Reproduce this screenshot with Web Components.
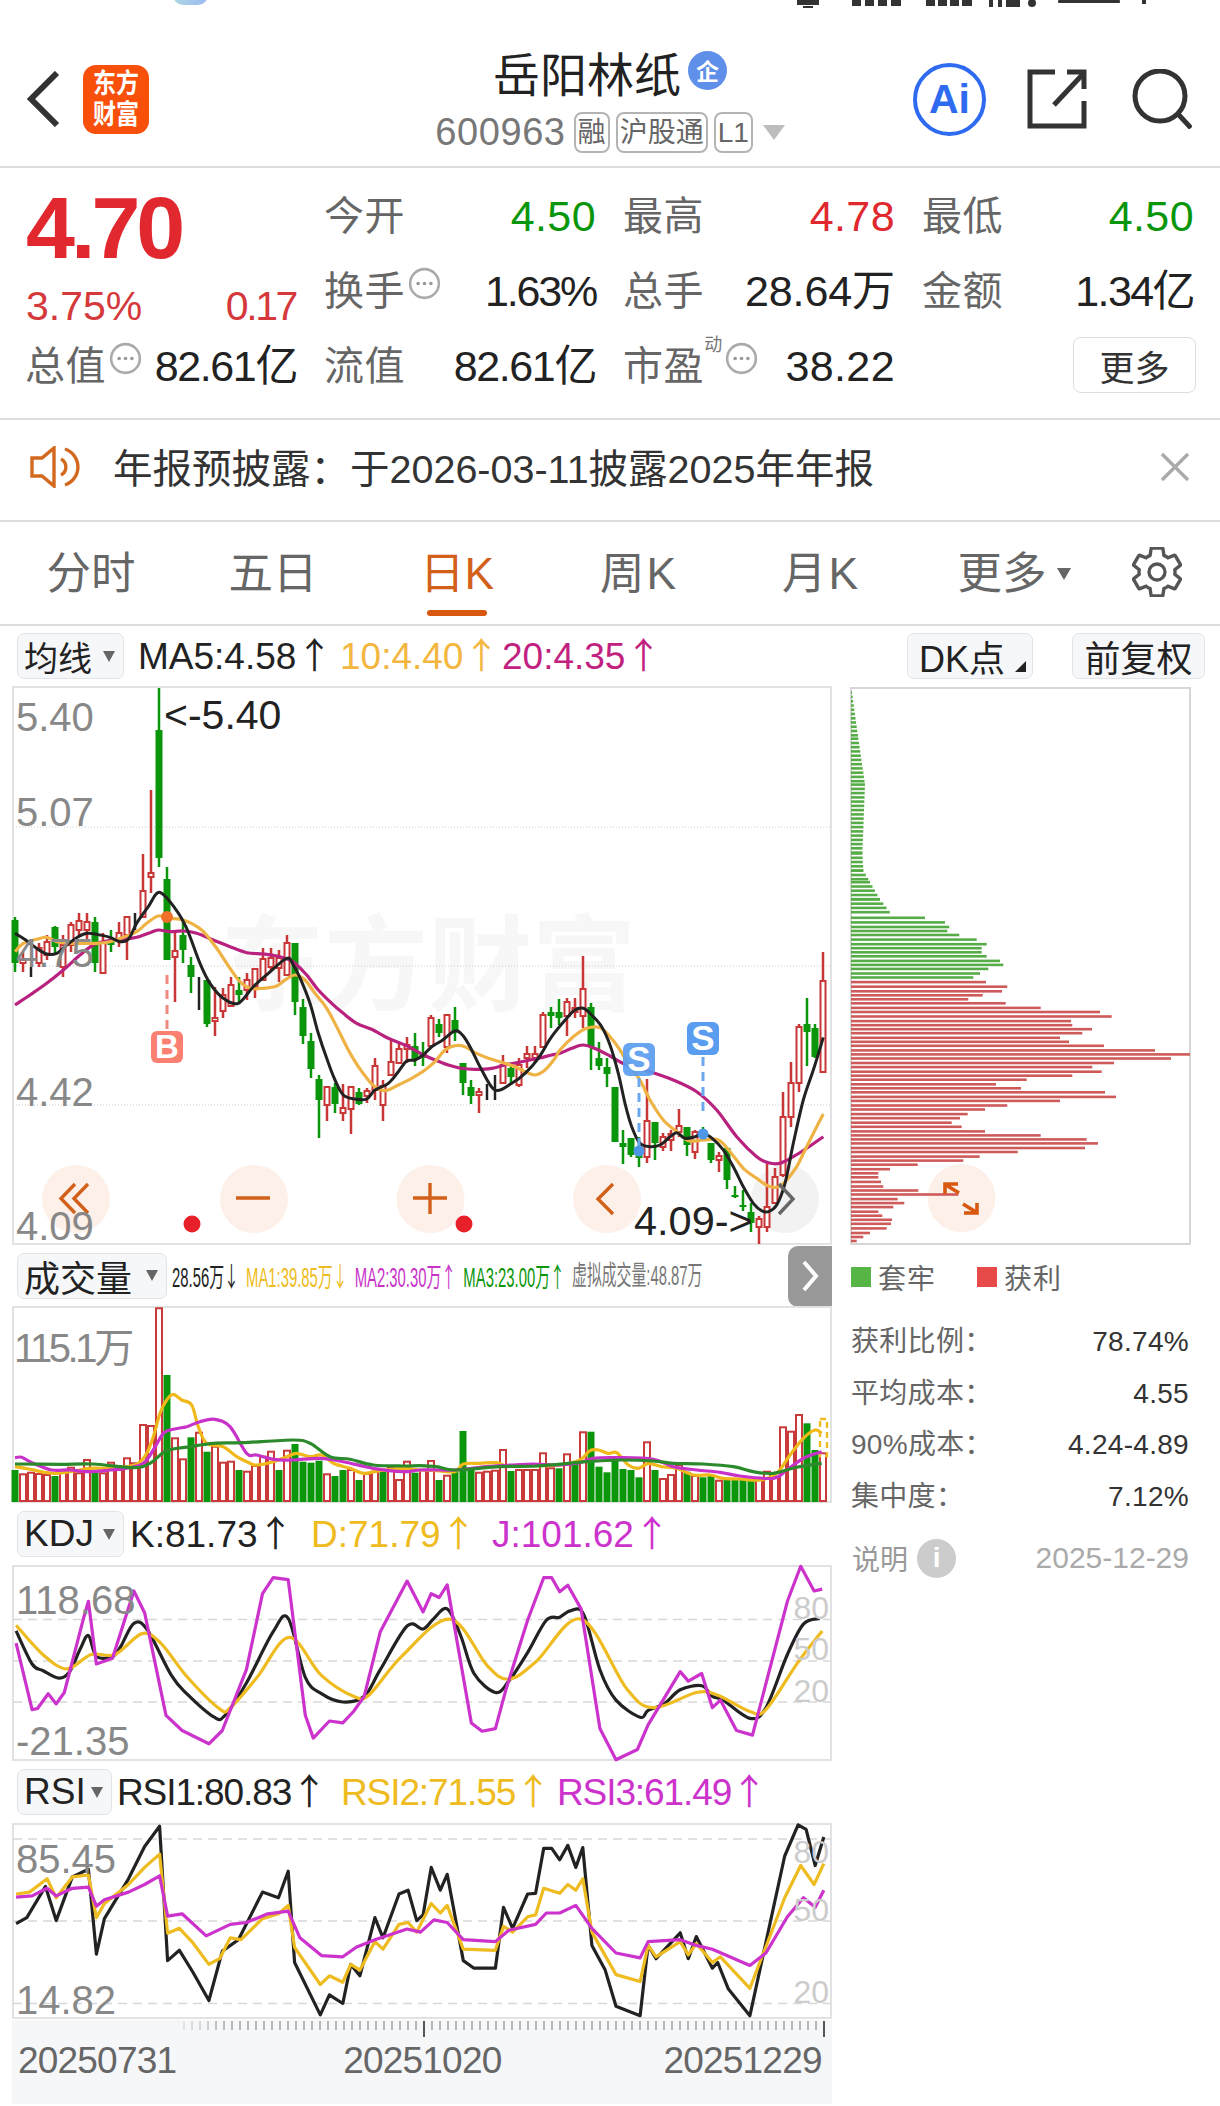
<!doctype html>
<html lang="zh">
<head>
<meta charset="utf-8">
<title>岳阳林纸</title>
<style>
  html, body { margin: 0; background: #fff; }
  body { width: 1220px; height: 2106px; overflow: hidden; color: #222;
    font-family: "Liberation Sans", "Noto Sans CJK SC", sans-serif; }
</style>
</head>
<body>
<status-bar></status-bar>
<stock-header></stock-header>
<quote-panel>
  <price-block style="grid-row: span 2"></price-block>
  <quote-cell style="color:#0a960a;letter-spacing:.4px"><span slot="label">今开</span>4.50</quote-cell>
  <quote-cell style="color:#e0282e;letter-spacing:.4px"><span slot="label">最高</span>4.78</quote-cell>
  <quote-cell style="color:#0a960a;letter-spacing:.4px"><span slot="label">最低</span>4.50</quote-cell>
  <quote-cell info style="letter-spacing:-2.2px"><span slot="label">换手</span>1.63%</quote-cell>
  <quote-cell style="letter-spacing:-.1px"><span slot="label">总手</span>28.64万</quote-cell>
  <quote-cell style="letter-spacing:-1.6px"><span slot="label">金额</span>1.34亿</quote-cell>
  <quote-cell info style="letter-spacing:-1.4px"><span slot="label">总值</span>82.61亿</quote-cell>
  <quote-cell style="letter-spacing:-1.4px"><span slot="label">流值</span>82.61亿</quote-cell>
  <quote-cell info style="letter-spacing:.4px"><span slot="label">市盈</span><span slot="sup">动</span>38.22</quote-cell>
  <more-button>更多</more-button>
</quote-panel>
<notice-bar>年报预披露：于2026-03-11披露2025年年报</notice-bar>
<period-tabs>
  <tab-item style="width:182px">分时</tab-item>
  <tab-item style="width:182px">五日</tab-item>
  <tab-item active style="width:186px">日K</tab-item>
  <tab-item style="width:178px;letter-spacing:2px">周K</tab-item>
  <tab-item style="width:186px;letter-spacing:2px">月K</tab-item>
  <tab-item caret style="width:200px">更多</tab-item>
</period-tabs>
<indicator-row style="height:60px;padding-left:17px;gap:14px">
  <ind-select style="width:107px;font-size:34px">均线</ind-select>
  <ind-stat style="color:#222;width:188px">MA5:4.58<b>↑</b></ind-stat>
  <ind-stat style="color:#f3b63f;width:148px">10:4.40<b>↑</b></ind-stat>
  <ind-stat style="color:#c2227f">20:4.35<b>↑</b></ind-stat>
  <plain-button corner style="margin-left:auto;width:126px">DK点</plain-button>
  <plain-button style="margin-left:25px;margin-right:15px;width:133px">前复权</plain-button>
</indicator-row>
<chart-layout>
  <div slot="left">
    <kline-chart></kline-chart>
    <indicator-row style="height:61px;padding-left:5px;gap:5px">
      <ind-select style="width:150px;font-size:36px">成交量</ind-select>
      <tiny-stats></tiny-stats>
      <flag-button></flag-button>
    </indicator-row>
    <volume-chart></volume-chart>
    <indicator-row style="height:62px;padding-left:5px;gap:6px">
      <ind-select style="width:107px;font-size:37px">KDJ</ind-select>
      <ind-stat style="color:#222;width:175px">K:81.73<b>↑</b></ind-stat>
      <ind-stat style="color:#eebb20;width:175px">D:71.79<b>↑</b></ind-stat>
      <ind-stat style="color:#cc33cc">J:101.62<b>↑</b></ind-stat>
    </indicator-row>
    <osc-chart kind="kdj"></osc-chart>
    <indicator-row style="height:62px;padding-left:5px;gap:5px">
      <ind-select style="width:95px;font-size:37px">RSI</ind-select>
      <ind-stat style="color:#222;width:219px;letter-spacing:-1.1px">RSI1:80.83<b>↑</b></ind-stat>
      <ind-stat style="color:#eebb20;width:211px;letter-spacing:-1.1px">RSI2:71.55<b>↑</b></ind-stat>
      <ind-stat style="color:#cc33cc;letter-spacing:-1.1px">RSI3:61.49<b>↑</b></ind-stat>
    </indicator-row>
    <osc-chart kind="rsi"></osc-chart>
    <date-axis></date-axis>
  </div>
  <chip-panel slot="right"></chip-panel>
</chart-layout>

<script>
// candle table, read off the screenshot in page pixels: type, high, body top, body bottom, low
const CANDLES = [
  ["g",917,920,963,972],["r",952,960,963,972],["k",967,967,977,977],["r",943,948,963,967],
  ["r",935,942,955,960],["g",926,927,947,955],["r",935,945,967,977],["r",922,925,945,952],
  ["r",913,921,930,937],["r",913,922,930,940],["g",917,922,963,972],["r",933,942,973,973],
  ["g",930,940,945,952],["r",922,933,940,947],["r",917,917,935,960],["k",913,913,930,930],
  ["r",854,891,917,918],["r",790,873,877,893],["g",688,730,858,867],["g",867,879,960,960],
  ["r",930,951,957,1002],["g",920,935,950,963],["g",957,965,977,993],["k",977,977,1010,1010],
  ["g",980,980,1024,1027],["r",987,1018,1021,1036],["r",988,995,1011,1018],["r",977,985,1006,1007],
  ["g",977,990,995,1003],["r",973,980,990,1000],["r",969,969,987,998],["r",948,959,980,980],
  ["r",948,958,967,970],["r",950,958,968,982],["r",935,943,975,975],["g",943,943,1002,1015],
  ["g",999,1007,1036,1044],["g",1033,1041,1069,1078],["g",1075,1079,1100,1138],["r",1087,1087,1105,1121],
  ["g",1083,1087,1104,1113],["r",1084,1108,1113,1121],["r",1087,1087,1109,1134],["g",1088,1092,1104,1105],
  ["r",1088,1091,1096,1103],["r",1058,1066,1090,1100],["r",1080,1086,1105,1121],["r",1040,1062,1075,1075],
  ["r",1043,1049,1063,1063],["r",1037,1045,1049,1063],["g",1033,1046,1060,1066],["g",1042,1052,1058,1066],
  ["r",1015,1018,1046,1047],["g",1019,1024,1033,1037],["r",1015,1015,1047,1053],["g",1007,1020,1032,1041],
  ["g",1063,1063,1083,1095],["g",1080,1087,1096,1104],["r",1088,1092,1095,1113],["k",1084,1084,1100,1100],
  ["k",1075,1075,1100,1100],["r",1055,1065,1083,1083],["g",1063,1068,1077,1085],["r",1058,1065,1085,1087],
  ["r",1046,1054,1058,1068],["r",1046,1054,1058,1063],["r",1012,1015,1047,1047],["g",1007,1012,1016,1028],
  ["g",999,1012,1018,1025],["r",998,1002,1016,1036],["r",998,1008,1012,1018],["r",956,989,1016,1028],
  ["g",1003,1007,1047,1070],["g",1042,1058,1066,1070],["g",1058,1067,1074,1087],["g",1087,1087,1142,1142],
  ["g",1130,1143,1147,1164],["g",1138,1138,1155,1157],["g",1137,1147,1158,1167],["r",1079,1121,1157,1163],
  ["g",1122,1122,1143,1160],["r",1133,1137,1147,1151],["r",1130,1134,1140,1151],["r",1109,1126,1132,1137],
  ["g",1127,1127,1145,1156],["r",1130,1132,1152,1159],["g",1127,1130,1138,1140],["g",1143,1143,1160,1163],
  ["r",1152,1156,1160,1172],["g",1148,1148,1180,1189],["g",1186,1195,1197,1198],["g",1190,1205,1207,1211],
  ["g",1203,1212,1223,1232],["r",1216,1219,1227,1244],["r",1164,1207,1227,1232],["r",1168,1177,1203,1203],
  ["r",1092,1117,1175,1177],["r",1062,1083,1117,1127],["r",1024,1027,1083,1092],["g",998,1024,1032,1066],
  ["g",1024,1028,1057,1058],["r",952,981,1072,1072]
];

// volume bar tops, y as read in the 3x crop of that chart
const VOLUME = "g510 r523 r518 r522 r525 g528 r510 r503 r520 r480 g518 r520 r488 r510 r475 r490 r375 r378 r25 g225 r415 r478 g412 r398 g455 r440 r488 r485 g510 r515 r498 r470 r455 g510 r452 g432 g485 g488 g482 r523 g528 g510 r510 g540 r522 r515 g515 r503 r540 r485 g518 r510 r483 g540 r527 g515 g393 g510 r518 r515 r512 r450 g513 r510 r510 r510 r460 r505 g505 r463 g490 r397 g395 g500 g517 g480 g507 g510 g532 r427 g510 r537 r525 r495 g515 r528 g532 g528 r542 g537 g537 g540 g542 r540 r515 r530 r382 r395 r345 g370 g450 r460".split(" ");

// crop coordinates -> page pixels
const crop = (ox, oy, sx, sy, list) => {
  const out = [];
  for (let i = 0; i < list.length; i += 2) out.push([ox + list[i] / sx, oy + list[i + 1] / sy]);
  return out;
};
const A = (...l) => crop(10, 880, 3, 3, l);
const B = (...l) => crop(285, 930, 3, 3, l);
const C = (...l) => crop(560, 930, 3, 3, l);
const V1 = (...l) => crop(10, 1300, 3, 3, l);
const V2 = (...l) => crop(420, 1300, 3, 3, l);
const O = (...l) => crop(0, 1510, 1.867, 2.63, l);

const MA5 = [...A(15,160,50,182,80,205,110,222,140,220,170,195,205,170,232,160,270,165,300,172,330,185,355,178,380,130,415,80,448,37,495,85,530,145,570,250,600,310,640,355,685,370,730,320,775,280,830,235),
  ...B(25,105,50,155,75,220,100,310,125,385,150,450,175,495,210,507,245,507,270,480,310,460,340,425,365,393,390,390,415,375,440,350,470,332,510,303,535,318,560,360,590,420,630,480,680,460,720,430,760,385,800,320),
  ...C(20,265,45,240,70,235,95,255,125,290,150,345,175,430,195,520,215,590,240,640,270,650,300,645,325,625,350,608,375,625,405,620,430,610,460,628,490,660,520,710,550,770,580,820,605,842,625,845,650,825,675,760,700,640,730,510,760,420,790,322)];
const MA10 = [...A(15,215,40,190,80,178,110,172,140,185,180,190,220,190,260,190,300,185,340,172,380,155,410,130,445,108,480,115,520,120,575,150,620,205,660,265,690,305,720,325,760,325,800,318),
  ...B(0,150,30,135,60,150,90,190,125,235,160,300,190,360,220,410,250,450,270,470,300,482,340,465,380,445,420,420,450,395,480,360,510,347,540,350,570,368,610,385,650,397,690,410,720,425,750,435,780,420,810,385),
  ...C(0,360,40,320,80,295,120,293,150,320,180,360,210,410,240,450,270,510,310,570,350,605,385,632,430,630,475,630,510,665,550,715,590,745,625,768,655,770,680,750,710,710,740,650,770,590,790,552)];
const MA20 = [...A(15,375,60,345,110,310,160,270,210,225,250,195,290,183,340,178,380,172,420,158,445,150,480,155,520,153,560,160,610,180,660,200,710,218,760,222,800,228,840,240),
  ...B(30,100,65,135,100,180,140,220,175,250,215,280,260,298,310,325,360,345,410,372,450,390,490,405,530,415,570,418,620,415,660,405,710,395,760,385,800,375),
  ...C(0,370,35,355,70,345,110,358,150,378,200,405,270,425,340,450,410,485,470,540,530,620,590,680,625,698,660,700,700,680,740,655,790,620)];

const VOL_LINES = [
  ["#f0b818", [...V1(15,500,60,508,110,518,140,520,180,515,240,505,300,505,350,500,385,490,410,460,430,410,450,340,470,300,490,283,515,300,545,315,565,380,590,430,640,440,680,470,720,490,740,495,790,485,830,470,860,460,900,470,935,465,970,490,1020,505,1060,520,1110,512,1180,505),
    ...V2(0,510,50,512,105,515,130,492,180,490,230,488,260,498,310,495,360,497,420,495,480,480,510,452,535,450,565,460,590,458,625,495,655,505,685,490,725,500,770,505,820,525,870,525,910,535,960,537,1020,540,1070,520,1110,465,1150,415,1185,390,1205,400)]],
  ["#c832c8", [...V1(15,473,35,472,70,490,125,510,180,510,240,515,300,510,350,505,400,490,430,450,460,400,490,388,530,380,570,365,615,358,660,380,710,460,740,465,790,478,850,480,930,475,1000,485,1090,505,1180,515),
    ...V2(0,510,60,510,105,510,200,500,280,495,340,492,420,495,480,488,520,475,600,473,700,478,760,500,830,510,900,517,960,528,1060,535,1100,510,1150,475,1205,455)]],
  ["#2b8a2b", [...V1(15,492,150,493,250,492,370,503,420,490,470,452,540,440,610,430,700,428,850,420,900,430,960,470,1020,478,1090,495,1180,498),
    ...V2(0,497,50,500,105,510,240,500,350,498,500,485,600,480,700,483,760,490,850,492,940,500,1000,515,1060,520,1130,502,1205,490)]]
];

const OSC = {
  kdj: {
    top: 1565, height: 196, grid: [1619.5, 1661, 1702],
    labels: [["118.68", 16, 1614], ["-21.35", 16, 1755]],
    side: [["80", 1619], ["50", 1660], ["20", 1702]],
    lines: [
      ["#222", O(30,318,60,405,80,422,110,442,130,425,150,365,165,330,180,385,210,385,225,360,250,298,275,315,320,435,350,485,400,545,420,540,460,455,510,320,538,285,570,440,600,483,640,505,680,490,710,420,760,305,790,313,810,285,835,260,860,330,885,430,925,480,950,450,985,375,1020,290,1045,282,1065,265,1090,275,1120,420,1150,500,1195,545,1210,527,1240,510,1270,473,1310,462,1330,490,1350,500,1400,548,1430,520,1470,380,1500,300,1530,285), true],
      ["#eebb20", O(30,303,80,380,125,418,170,380,215,380,265,325,300,350,350,440,410,523,430,520,480,440,540,335,600,435,660,490,690,485,750,385,840,287,910,410,950,445,1000,400,1085,287,1170,470,1220,520,1300,480,1340,487,1400,530,1430,525,1490,400,1535,318), true],
      ["#cc33cc", O(30,350,60,525,70,522,90,483,105,510,120,480,155,290,165,240,180,405,210,390,250,213,270,270,310,540,340,580,390,615,415,580,460,420,490,220,510,178,538,183,570,540,585,600,615,555,640,560,660,530,680,490,710,320,760,187,790,268,805,220,820,230,835,197,880,560,900,582,925,575,945,470,985,290,1015,178,1030,178,1045,215,1060,198,1085,260,1120,575,1150,657,1190,630,1210,565,1270,425,1285,450,1310,430,1330,520,1345,500,1375,580,1405,592,1470,240,1495,148,1520,213,1535,208)]
    ]
  },
  rsi: {
    top: 1823, height: 196, grid: [1839, 1921, 2003.5],
    labels: [["85.45", 16, 1873], ["14.82", 16, 2014]],
    side: [["80", 1863], ["50", 1921], ["20", 2003]],
    lines: [
      ["#222", O(30,1088,50,1072,85,990,105,1080,135,965,165,945,180,1168,195,1075,240,970,270,885,298,832,313,1185,335,1158,360,1215,390,1290,415,1160,445,1130,490,1005,520,1020,538,950,550,1190,598,1328,615,1275,640,1298,655,1195,672,1225,700,1072,715,1125,745,1010,762,1000,778,1080,790,1065,805,940,822,1000,835,958,865,1185,885,1205,925,1205,940,1045,957,1100,985,1010,1000,1008,1015,890,1030,890,1045,920,1060,882,1075,940,1088,888,1105,1145,1130,1210,1150,1305,1195,1330,1210,1145,1225,1180,1270,1112,1285,1180,1300,1122,1330,1205,1340,1190,1360,1260,1400,1330,1465,910,1490,828,1505,840,1522,935,1538,860)],
      ["#eebb20", O(30,1010,55,1005,88,970,105,1020,135,965,165,960,180,1072,195,1035,240,985,270,940,298,905,313,1113,335,1100,360,1138,390,1195,410,1180,430,1125,450,1130,490,1075,520,1062,538,1040,550,1150,598,1248,615,1225,640,1242,655,1195,672,1210,700,1135,715,1155,745,1090,762,1085,778,1110,805,1035,822,1060,835,1040,865,1155,925,1158,940,1095,957,1110,985,1070,1000,1065,1015,995,1045,1008,1060,985,1075,1000,1088,970,1105,1110,1150,1222,1195,1240,1210,1145,1225,1175,1270,1135,1285,1170,1300,1140,1330,1190,1345,1175,1400,1258,1465,1020,1495,935,1520,985,1538,930)],
      ["#cc33cc", O(30,1018,60,1015,88,995,105,1015,135,995,165,992,180,1042,195,1025,240,1005,270,985,298,962,313,1068,340,1062,385,1120,430,1090,460,1085,500,1062,538,1055,560,1125,600,1172,640,1175,665,1150,700,1130,760,1102,785,1110,810,1078,835,1085,865,1130,925,1135,950,1105,1000,1090,1020,1060,1045,1060,1075,1040,1105,1100,1150,1165,1195,1178,1210,1135,1270,1130,1300,1145,1330,1155,1400,1198,1430,1165,1470,1070,1500,1020,1522,1045,1538,1000)]
    ]
  }
};

// chip distribution, crop y -> crop x of the bar end
const CHIP_TOP = [20,66,100,85,180,105,300,97,330,100,350,120,380,150,405,183];
const CHIP_ROWS = [412,285,420,345,428,358,435,352,442,388,450,440,458,470,465,455,472,455,479,470,487,510,494,520,501,475,509,450,516,430,
  524,468,532,532,540,516,547,458,554,415,561,527,569,632,576,810,584,845,592,723,599,727,606,786,613,757,621,690,628,717,635,822,643,975,650,1080,657,1023,665,852,672,787,680,815,687,727,694,590,702,498,709,573,716,825,724,858,731,690,739,532,746,465,754,413,761,390,769,365,776,395,784,465,791,632,798,770,805,804,813,765,820,563,828,449,835,400,842,263,850,180,857,145,864,145,872,153,880,160,887,265,894,385,902,203,909,223,916,190,924,145,931,157,938,186,945,183,953,170,961,120,968,100,975,80];

const cx = i => 15 + 8 * i;
const fmt = n => +n.toFixed(1);
const poly = pts => pts.map(p => fmt(p[0]) + "," + fmt(p[1])).join(" ");

// catmull-rom through the points, the MA lines on the main chart are smooth
function smooth(pts) {
  let d = `M${fmt(pts[0][0])} ${fmt(pts[0][1])}`;
  for (let i = 0; i < pts.length - 1; i++) {
    const p0 = pts[i - 1] || pts[i], p1 = pts[i], p2 = pts[i + 1], p3 = pts[i + 2] || p2;
    d += `C${fmt(p1[0] + (p2[0] - p0[0]) / 6)} ${fmt(p1[1] + (p2[1] - p0[1]) / 6)} ${fmt(p2[0] - (p3[0] - p1[0]) / 6)} ${fmt(p2[1] - (p3[1] - p1[1]) / 6)} ${fmt(p2[0])} ${fmt(p2[1])}`;
  }
  return d;
}

customElements.define("status-bar", class extends HTMLElement {
  constructor() {
    super();
    this.attachShadow({ mode: "open" }).innerHTML = `
<style>
  :host { display: block; height: 44px; overflow: hidden; }
  .row { display: flex; align-items: flex-start; height: 12px; }
  .time { margin: -31px 0 0 70px; font: 700 34px/34px "Liberation Sans", sans-serif; color: #222; width: 103px; letter-spacing: 3px; }
  .app { width: 35px; height: 35px; margin-top: -30px; border-radius: 10px; background: linear-gradient(120deg, #b5e6d8, #9bb8f2); }
  svg { margin-left: auto; }
</style>
<div class="row">
  <span class="time">7:00</span>
  <span class="app"></span>
  <svg width="430" height="10" viewBox="790 0 430 10" fill="#333">
    <rect x="797" y="0" width="22" height="5"/><rect x="803" y="6" width="10" height="2"/>
    <rect x="852" y="0" width="9" height="6"/><rect x="865" y="0" width="9" height="6"/><rect x="878" y="0" width="9" height="6"/><rect x="891" y="0" width="10" height="6"/>
    <rect x="926" y="0" width="9" height="6"/><rect x="938" y="0" width="9" height="6"/><rect x="950" y="0" width="9" height="6"/><rect x="962" y="0" width="10" height="6"/>
    <rect x="989" y="0" width="4" height="7"/><rect x="998" y="0" width="4" height="7"/><rect x="1006" y="0" width="14" height="7"/><circle cx="1032" cy="3" r="4"/>
    <rect x="1058" y="0" width="62" height="3" rx="1"/><rect x="1142" y="0" width="4" height="4"/>
  </svg>
</div>`;
  }
});

customElements.define("stock-header", class extends HTMLElement {
  constructor() {
    super();
    this.attachShadow({ mode: "open" }).innerHTML = `
<style>
  :host { display: grid; grid-template-columns: 320px 580px 320px; height: 122px; border-bottom: 2px solid #ddd; }
  .side { display: flex; align-items: center; padding-bottom: 12px; }
  .left { padding-left: 26px; gap: 23px; }
  .logo { width: 66px; height: 69px; border-radius: 13px; background: #f8500a; color: #fff;
    display: flex; flex-direction: column; align-items: center; justify-content: center;
    font-size: 23px; line-height: 31px; font-weight: 700; }
  .logo span { display: block; transform: scaleY(1.2); }
  .mid { display: flex; flex-direction: column; align-items: center; }
  .title { height: 60px; display: flex; align-items: center; gap: 7px; font-size: 47px; color: #222; margin-top: -3px; }
  .qi { width: 39px; height: 39px; border-radius: 50%; background: #5f8fe8; color: #fff; font-size: 23px; font-weight: 700;
    display: flex; align-items: center; justify-content: center; margin-top: -2px; }
  .sub { height: 60px; display: flex; align-items: center; gap: 6px; color: #777; margin-top: 1px; }
  .code { font-size: 38px; letter-spacing: .6px; margin-right: 2px; }
  .tag { border: 2px solid #b4b4b4; border-radius: 8px; height: 37px; padding: 0 2px; font-size: 28px; line-height: 37px; color: #666; }
  .drop { width: 0; height: 0; border: 11px solid transparent; border-top: 15px solid #bdbdbd; border-bottom: 0; margin-left: 4px; }
  .right { justify-content: flex-end; padding-right: 28px; }
  .ai { width: 65px; height: 65px; border: 4px solid #2e6bf0; border-radius: 50%; color: #2e6bf0; font: 700 41px/1 "Liberation Sans", sans-serif;
    display: flex; align-items: center; justify-content: center; }
  .share { margin-left: 41px; }
  .search { margin-left: 45px; }
</style>
<div class="side left">
  <svg width="34" height="56" viewBox="0 0 34 56"><path d="M31 2 5 28l26 26" fill="none" stroke="#333" stroke-width="6"/></svg>
  <div class="logo"><span>东方</span><span>财富</span></div>
</div>
<div class="mid">
  <div class="title">岳阳林纸<span class="qi">企</span></div>
  <div class="sub"><span class="code">600963</span><span class="tag">融</span><span class="tag">沪股通</span><span class="tag">L1</span><span class="drop"></span></div>
</div>
<div class="side right">
  <span class="ai">Ai</span>
  <svg class="share" width="60" height="60" viewBox="0 0 60 60" fill="none" stroke="#333" stroke-width="5">
    <path d="M28 3H3v54h54V32"/><path d="M27 36 56 5"/><path d="M40 3h17v17"/>
  </svg>
  <svg class="search" width="60" height="60" viewBox="0 0 60 60" fill="none" stroke="#333" stroke-width="5">
    <circle cx="28" cy="27" r="25"/><path d="m46 45 13 14"/>
  </svg>
</div>`;
  }
});

customElements.define("quote-panel", class extends HTMLElement {
  constructor() {
    super();
    this.attachShadow({ mode: "open" }).innerHTML = `
<style>
  :host { display: grid; height: 240px; padding: 10px 0 0 25px; border-bottom: 2px solid #ddd;
    grid-template-columns: repeat(4, 272px); column-gap: 27px; grid-auto-rows: 75px; align-content: start; }
</style>
<slot></slot>`;
  }
});

customElements.define("price-block", class extends HTMLElement {
  constructor() {
    super();
    this.attachShadow({ mode: "open" }).innerHTML = `
<style>
  :host { display: block; color: #e0282e; padding: 2px 0 0 1px; }
  .price { height: 96px; font-size: 88px; line-height: 96px; font-weight: 700; letter-spacing: -4px; }
  .row { height: 60px; display: flex; justify-content: space-between; align-items: center; color: #d5393c; font-size: 41px; }
  .chg { letter-spacing: -2.4px; padding-right: 1px; }
</style>
<div class="price">4.70</div>
<div class="row"><span>3.75%</span><span class="chg">0.17</span></div>`;
  }
});

customElements.define("quote-cell", class extends HTMLElement {
  constructor() {
    super();
    this.attachShadow({ mode: "open" }).innerHTML = `
<style>
  :host { display: flex; align-items: center; font-size: 43px; color: #222; }
  .label { color: #666; font-size: 40px; letter-spacing: .6px; display: flex; align-items: center; margin-top: -6px; }
  .info { display: none; margin: -8px 0 0 3px; }
  :host([info]) .info { display: block; }
  .value { margin-left: auto; white-space: nowrap; line-height: 50px; }
  ::slotted([slot="sup"]) { font-size: 18px; letter-spacing: 0; color: #777; align-self: flex-start; margin-top: -4px; }
</style>
<span class="label"><slot name="label"></slot><slot name="sup"></slot>
  <svg class="info" width="33" height="33" viewBox="0 0 31 31"><circle cx="15.5" cy="15.5" r="13.5" fill="none" stroke="#aaa" stroke-width="2.4"/><g fill="#999"><circle cx="9.5" cy="15.5" r="1.7"/><circle cx="15.5" cy="15.5" r="1.7"/><circle cx="21.5" cy="15.5" r="1.7"/></g></svg>
</span>
<span class="value"><slot></slot></span>`;
  }
});

customElements.define("more-button", class extends HTMLElement {
  constructor() {
    super();
    this.attachShadow({ mode: "open" }).innerHTML = `
<style>
  :host { display: flex; align-items: center; justify-content: center; width: 121px; height: 54px; margin: 9px 0 0 151px;
    border: 1.5px solid #ddd; border-radius: 8px; font-size: 35px; color: #333; }
</style>
<slot></slot>`;
  }
});

customElements.define("notice-bar", class extends HTMLElement {
  constructor() {
    super();
    this.attachShadow({ mode: "open" }).innerHTML = `
<style>
  :host { display: flex; align-items: center; height: 94px; border-bottom: 2px solid #ddd; padding: 0 30px 6px 30px; font-size: 39.5px; color: #333; }
  .text { margin-left: 32px; margin-top: -4px; white-space: nowrap; }
  .close { margin-left: auto; }
</style>
<svg width="51" height="42" viewBox="0 0 51 42" fill="none" stroke="#d2691e" stroke-width="3.4">
  <path d="M2 12h10L24 2v38L12 30H2z"/><path d="M31 13a9 9 0 0 1 0 16"/><path d="M35 3a19 19 0 0 1 0 36"/>
</svg>
<span class="text"><slot></slot></span>
<svg class="close" width="30" height="30" viewBox="0 0 30 30" fill="none" stroke="#aaa" stroke-width="3.4"><path d="m2 2 26 26M28 2 2 28"/></svg>`;
  }
});

customElements.define("period-tabs", class extends HTMLElement {
  constructor() {
    super();
    this.attachShadow({ mode: "open" }).innerHTML = `
<style>
  :host { display: flex; height: 102px; border-bottom: 2px solid #ddd; }
  svg { margin: 25px 0 0 18px; }
</style>
<slot></slot>
<svg width="50" height="50" viewBox="2 2 20 20" fill="none" stroke="#555" stroke-width="1.35">
  <path d="M19.14 12.94c.04-.3.06-.61.06-.94 0-.32-.02-.64-.07-.94l2.03-1.58c.18-.14.23-.41.12-.61l-1.92-3.32c-.12-.22-.37-.29-.59-.22l-2.39.96c-.5-.38-1.03-.7-1.62-.94L14.4 2.81c-.04-.24-.24-.41-.48-.41h-3.84c-.24 0-.43.17-.47.41L9.25 5.35c-.59.24-1.13.57-1.62.94l-2.39-.96c-.22-.08-.47 0-.59.22L2.74 8.87c-.12.21-.08.47.12.61l2.03 1.58c-.05.3-.09.63-.09.94s.02.64.07.94l-2.03 1.58c-.18.14-.23.41-.12.61l1.92 3.32c.12.22.37.29.59.22l2.39-.96c.5.38 1.03.7 1.62.94l.36 2.54c.05.24.24.41.48.41h3.84c.24 0 .44-.17.47-.41l.36-2.54c.59-.24 1.13-.56 1.62-.94l2.39.96c.22.08.47 0 .59-.22l1.92-3.32c.12-.22.07-.47-.12-.61z"/>
  <circle cx="12" cy="12" r="3.2"/>
</svg>`;
  }
});

customElements.define("tab-item", class extends HTMLElement {
  constructor() {
    super();
    this.attachShadow({ mode: "open" }).innerHTML = `
<style>
  :host { display: flex; flex-direction: column; align-items: center; color: #666; font-size: 44.5px; }
  :host([active]) { color: #d2601a; }
  .label { height: 60px; margin-top: 22px; line-height: 60px; display: flex; align-items: center; gap: 10px; }
  .caret { display: none; width: 0; height: 0; border: 7px solid transparent; border-top: 12px solid #666; border-bottom: 0; }
  :host([caret]) .caret { display: block; }
  .line { width: 60px; height: 6px; margin-top: 6px; border-radius: 3px; }
  :host([active]) .line { background: #d9580f; }
</style>
<div class="label"><slot></slot><i class="caret"></i></div>
<div class="line"></div>`;
  }
});

customElements.define("indicator-row", class extends HTMLElement {
  constructor() {
    super();
    this.attachShadow({ mode: "open" }).innerHTML = `
<style>
  :host { display: flex; align-items: center; }
</style>
<slot></slot>`;
  }
});

customElements.define("ind-select", class extends HTMLElement {
  constructor() {
    super();
    this.attachShadow({ mode: "open" }).innerHTML = `
<style>
  :host { display: flex; align-items: center; justify-content: space-between; box-sizing: border-box; height: 46px; flex: none;
    padding: 0 8px 0 6px; border: 1.5px solid #e2e3e6; border-radius: 7px; background: #f6f7f9; color: #222; white-space: nowrap; }
  i { width: 0; height: 0; border: 6.5px solid transparent; border-top: 11px solid #666; border-bottom: 0; }
</style>
<span><slot></slot></span><i></i>`;
  }
});

customElements.define("plain-button", class extends HTMLElement {
  constructor() {
    super();
    this.attachShadow({ mode: "open" }).innerHTML = `
<style>
  :host { display: flex; align-items: center; justify-content: center; box-sizing: border-box; height: 46px; position: relative;
    border: 1.5px solid #e2e3e6; border-radius: 7px; background: #f6f7f9; font-size: 36px; color: #222; white-space: nowrap; }
  i { display: none; position: absolute; right: 6px; bottom: 6px; width: 0; height: 0; border-left: 11px solid transparent; border-bottom: 11px solid #222; }
  :host([corner]) { justify-content: flex-start; padding-left: 11px; }
  :host([corner]) i { display: block; }
</style>
<slot></slot><i></i>`;
  }
});

customElements.define("ind-stat", class extends HTMLElement {
  constructor() {
    super();
    this.attachShadow({ mode: "open" }).innerHTML = `
<style>
  :host { display: block; font-size: 37px; line-height: 46px; white-space: nowrap; flex: none; }
  ::slotted(b) { font-family: "Noto Sans CJK SC", sans-serif; font-weight: 400; font-size: 36px; line-height: 40px; }
</style>
<slot></slot>`;
  }
});

customElements.define("tiny-stats", class extends HTMLElement {
  constructor() {
    super();
    this.attachShadow({ mode: "open" }).innerHTML = `
<style>
  :host { display: block; flex: 1; min-width: 0; height: 30px; }
  .in { display: inline-flex; gap: 13px; font-size: 27px; line-height: 30px; white-space: nowrap; transform: scaleX(.55); transform-origin: left center; }
  b { font-family: "Noto Sans CJK SC", sans-serif; font-weight: 400; line-height: 30px; }
</style>
<div class="in">
  <span style="color:#222">28.56万<b>↓</b></span>
  <span style="color:#eebb20">MA1:39.85万<b>↓</b></span>
  <span style="color:#c832c8">MA2:30.30万<b>↑</b></span>
  <span style="color:#0a960a">MA3:23.00万<b>↑</b></span>
  <span style="color:#777">虚拟成交量:48.87万</span>
</div>`;
  }
});

customElements.define("flag-button", class extends HTMLElement {
  constructor() {
    super();
    this.attachShadow({ mode: "open" }).innerHTML = `
<style>
  :host { display: flex; align-items: center; justify-content: center; flex: none; width: 44px; height: 61px; margin-top: 1px;
    background: #999; border-radius: 10px 0 0 10px; }
</style>
<svg width="18" height="32" viewBox="0 0 18 32" fill="none" stroke="#fff" stroke-width="4"><path d="m3 2 12 14L3 30"/></svg>`;
  }
});

customElements.define("chart-layout", class extends HTMLElement {
  constructor() {
    super();
    this.attachShadow({ mode: "open" }).innerHTML = `
<style>
  :host { display: flex; }
  .left { width: 820px; margin-left: 12px; }
  .right { width: 341px; margin-left: 18px; }
</style>
<div class="left"><slot name="left"></slot></div>
<div class="right"><slot name="right"></slot></div>`;
  }
});

customElements.define("kline-chart", class extends HTMLElement {
  constructor() {
    super();
    this.attachShadow({ mode: "open" }).innerHTML = `
<style>
  :host { display: block; height: 559px; }
  svg { display: block; overflow: visible; }
  text { font-family: "Liberation Sans", "Noto Sans CJK SC", sans-serif; font-size: 40px; }
</style>
<svg width="820" height="559" viewBox="12 686 820 559">${this.__draw()}</svg>`;
  }

  __candles() {
    return CANDLES.map(([t, hi, top, bot, lo], i) => {
      const x = cx(i);
      if (t === "k") return `<path d="M${x} ${hi}V${lo}" stroke="#222" stroke-width="2.5"/>`;
      if (t === "g") return `<path d="M${x} ${hi}V${lo}" stroke="#0a960a" stroke-width="2.5"/><rect x="${x - 3.5}" y="${top}" width="7" height="${Math.max(bot - top, 2)}" fill="#0a960a"/>`;
      return `<path d="M${x} ${hi}V${top}M${x} ${bot}V${lo}" stroke="#c93636" stroke-width="2.5"/><rect x="${x - 2.5}" y="${top}" width="5" height="${bot - top}" fill="#fff" stroke="#c93636" stroke-width="2"/>`;
    }).join("");
  }

  __round(x, fill) {
    return `<circle cx="${x}" cy="1199" r="34" fill="${fill}"/>`;
  }

  __draw() {
    const ic = 'fill="none" stroke="#d2601a" stroke-width="3.4"';
    const labels = [["5.40", 731], ["5.07", 826], ["4.75", 967], ["4.42", 1106], ["4.09", 1240]];
    return `
<rect x="13" y="687" width="818" height="557" fill="#fff" stroke="#e2e2e2" stroke-width="2"/>
<text x="220" y="1003" fill="#f7f7f7" font-weight="700" style="font-size:104px">东方财富</text>
${[827, 966, 1105].map(y => `<path d="M13 ${y}H831" stroke="#ccc" stroke-dasharray="1 2"/>`).join("")}
${this.__round(76, "#fdf0e9")}${this.__round(254, "#fdf0e9")}${this.__round(430.5, "#fdf0e9")}${this.__round(607, "#fdf0e9")}${this.__round(785, "#f2f2f2")}
${this.__candles()}
<path d="${smooth(MA20)}" fill="none" stroke="#b8217e" stroke-width="3.2"/>
<path d="${smooth(MA10)}" fill="none" stroke="#efb244" stroke-width="3.2"/>
<path d="${smooth(MA5)}" fill="none" stroke="#222" stroke-width="3"/>
<path d="M167 975V1030" stroke="#ee8a80" stroke-width="3" stroke-dasharray="9 6"/>
<circle cx="167" cy="917" r="6" fill="#f0702a"/>
<rect x="151" y="1031" width="32" height="32" rx="6" fill="#fb8072"/>
<text x="167" y="1058" text-anchor="middle" fill="#fff" font-weight="700" style="font-size:33px">B</text>
<path d="M639 1078V1148" stroke="#6aa8ee" stroke-width="3" stroke-dasharray="9 6"/>
<circle cx="639" cy="1151" r="5.5" fill="#4c97e8"/>
<rect x="623" y="1043" width="32" height="33" rx="6" fill="#5a9df0" fill-opacity=".92"/>
<text x="639" y="1071" text-anchor="middle" fill="#fff" font-weight="700" style="font-size:35px">S</text>
<path d="M703 1057V1113" stroke="#6aa8ee" stroke-width="3" stroke-dasharray="9 6"/>
<circle cx="703" cy="1134" r="5.5" fill="#4c97e8"/>
<rect x="687" y="1022" width="32" height="33" rx="6" fill="#5a9df0"/>
<text x="703" y="1050" text-anchor="middle" fill="#fff" font-weight="700" style="font-size:35px">S</text>
<path d="M75 1184 61 1198.5 75 1213M88 1184 74 1198.5 88 1213" ${ic}/>
<path d="M236 1198H270" ${ic}/>
<path d="M413 1198H447M430 1183V1214" ${ic}/>
<path d="M613 1184 598 1199 613 1214" ${ic}/>
<path d="M779 1184 793 1199 779 1214" fill="none" stroke="#666" stroke-width="3.4"/>
<circle cx="192" cy="1224" r="8.5" fill="#e8202a"/><circle cx="464" cy="1224" r="8.5" fill="#e8202a"/>
${labels.map(([t, y]) => `<text x="16" y="${y}" fill="#888">${t}</text>`).join("")}
<text x="164" y="729" fill="#222" style="font-size:41px">&lt;-5.40</text>
<text x="634" y="1235" fill="#222" style="font-size:41.5px">4.09-&gt;</text>`;
  }
});

customElements.define("volume-chart", class extends HTMLElement {
  constructor() {
    super();
    const bars = VOLUME.map((v, i) => {
      const x = cx(i), top = 1300 + +v.slice(1) / 3;
      if (v[0] === "g") return `<rect x="${x - 3.5}" y="${fmt(top)}" width="7" height="${fmt(1502 - top)}" fill="#0a960a"/>`;
      return `<rect x="${x - 3}" y="${fmt(top)}" width="6" height="${fmt(1501 - top)}" fill="#fff" stroke="#c93a3a" stroke-width="2"/>`;
    }).join("");
    const lines = VOL_LINES.map(([c, p]) => `<path d="${smooth(p)}" fill="none" stroke="${c}" stroke-width="3.2"/>`).join("");
    this.attachShadow({ mode: "open" }).innerHTML = `
<style>
  :host { display: block; height: 197px; }
  svg { display: block; overflow: visible; }
  text { font-family: "Liberation Sans", "Noto Sans CJK SC", sans-serif; font-size: 40px; }
</style>
<svg width="820" height="197" viewBox="12 1306 820 197">
  <rect x="13" y="1307" width="818" height="195" fill="#fff" stroke="#e2e2e2" stroke-width="2"/>
  ${bars}
  <rect x="820" y="1419" width="7" height="37" fill="none" stroke="#eebb20" stroke-width="2.4" stroke-dasharray="6 4"/>
  ${lines}
  <text x="14" y="1362" fill="#888" letter-spacing="-3.4">115.1万</text>
</svg>`;
  }
});

customElements.define("osc-chart", class extends HTMLElement {
  connectedCallback() {
    if (this.shadowRoot) return;
    const c = OSC[this.getAttribute("kind")];
    const lines = c.lines.map(([col, p, curved]) => curved
      ? `<path d="${smooth(p)}" fill="none" stroke="${col}" stroke-width="3.2"/>`
      : `<polyline points="${poly(p)}" fill="none" stroke="${col}" stroke-width="3.2" stroke-linejoin="round"/>`).join("");
    this.attachShadow({ mode: "open" }).innerHTML = `
<style>
  :host { display: block; height: ${c.height}px; }
  svg { display: block; overflow: visible; }
  text { font-family: "Liberation Sans", sans-serif; font-size: 40px; }
</style>
<svg width="820" height="${c.height}" viewBox="12 ${c.top} 820 ${c.height}">
  <rect x="13" y="${c.top + 1}" width="818" height="${c.height - 2}" fill="#fff" stroke="#e2e2e2" stroke-width="2"/>
  ${c.grid.map(y => `<path d="M13 ${y}H831" stroke="#d8d8d8" stroke-width="1.4" stroke-dasharray="9 6"/>`).join("")}
  ${lines}
  ${c.labels.map(([t, x, y]) => `<text x="${x}" y="${y}" fill="#888">${t}</text>`).join("")}
  ${c.side.map(([t, y]) => `<text x="829" y="${y}" fill="#ccc" text-anchor="end" style="font-size:32px">${t}</text>`).join("")}
</svg>`;
  }
});

customElements.define("date-axis", class extends HTMLElement {
  constructor() {
    super();
    let ticks = "";
    for (let x = 184; x < 826; x += 8) {
      const major = x === 424 || x === 824;
      const op = x < 230 ? fmt(0.3 + (x - 184) / 70) : 1;
      ticks += `<path d="M${x} 1V${major ? 17 : 10}" stroke="${major ? "#555" : "#9a9a9a"}" stroke-width="${major ? 2 : 1.4}" opacity="${op}"/>`;
    }
    this.attachShadow({ mode: "open" }).innerHTML = `
<style>
  :host { display: block; height: 84px; margin-top: 1px; background: #f6f7f9; overflow: hidden; }
  svg { display: block; }
  .labels { display: flex; margin-top: 3px; padding-left: 6px; font-size: 37px; line-height: 40px; color: #666; letter-spacing: -.8px; }
  .labels span + span { margin-left: 167px; }
  .labels span:last-child { margin-left: 162px; }
</style>
<svg width="820" height="18" viewBox="12 0 820 18">${ticks}</svg>
<div class="labels"><span>20250731</span><span>20251020</span><span>20251229</span></div>`;
  }
});

customElements.define("chip-panel", class extends HTMLElement {
  constructor() {
    super();
    this.attachShadow({ mode: "open" }).innerHTML = `
<style>
  :host { display: block; font-size: 28px; color: #666; }
  svg.chart { display: block; }
  .legend { display: flex; align-items: center; height: 40px; margin-top: 12px; padding-left: 1px; letter-spacing: 1px; }
  .legend i { width: 20px; height: 20px; margin-right: 7px; }
  .legend span { width: 92px; margin-right: 7px; white-space: nowrap; }
  .stats { margin-top: 19px; padding: 0 2px 0 1px; letter-spacing: .3px; }
  .stats div { display: flex; justify-content: space-between; height: 51.5px; line-height: 52px; white-space: nowrap; }
  .stats b { font-weight: 400; color: #333; }
  .foot { display: flex; align-items: center; height: 52px; margin-top: 10px; padding: 0 2px; color: #999; }
  .i { width: 39px; height: 39px; margin-left: 9px; border-radius: 50%; background: #ccc; color: #fff; font-weight: 700; font-size: 28px; display: flex; align-items: center; justify-content: center; }
  .date { margin-left: auto; font-size: 30px; color: #aaa; }
</style>
<svg class="chart" width="341" height="559" viewBox="850 686 341 559">${this.__draw()}</svg>
<div class="legend"><i style="background:#56b544"></i><span>套牢</span><i style="background:#e84a4a"></i><span>获利</span></div>
<div class="stats">
  <div>获利比例：<b>78.74%</b></div>
  <div>平均成本：<b>4.55</b></div>
  <div>90%成本：<b>4.24-4.89</b></div>
  <div>集中度：<b>7.12%</b></div>
</div>
<div class="foot">说明<span class="i">i</span><span class="date">2025-12-29</span></div>`;
  }

  __row(y, end) {
    const w = end / 3 + 830 - 851;
    return `<rect x="851" y="${fmt(680 + y / 1.742)}" width="${fmt(w)}" height="2.6" fill="${y < 520 ? "#56ad48" : "#cf5a5a"}"/>`;
  }

  __draw() {
    let rows = "";
    // the thin tail on top is interpolated, the rest was read row by row
    for (let k = 0; k < CHIP_TOP.length - 2; k += 2) {
      for (let y = CHIP_TOP[k]; y < CHIP_TOP[k + 2]; y += 7.4) {
        const t = (y - CHIP_TOP[k]) / (CHIP_TOP[k + 2] - CHIP_TOP[k]);
        rows += this.__row(y, CHIP_TOP[k + 1] + (CHIP_TOP[k + 3] - CHIP_TOP[k + 1]) * t);
      }
    }
    for (let k = 0; k < CHIP_ROWS.length; k += 2) rows += this.__row(CHIP_ROWS[k], CHIP_ROWS[k + 1]);
    return `
<rect x="851" y="688" width="339" height="556" fill="#fff" stroke="#d6d6d6" stroke-width="2"/>
<circle cx="961.5" cy="1198" r="34" fill="#fdf0e9"/>
${rows}
<path d="M945 1194V1184H958M946 1185 959 1193M977 1203V1213H964M976 1212 963 1204" fill="none" stroke="#d9580f" stroke-width="3.6"/>`;
  }
});
</script>
</body>
</html>
